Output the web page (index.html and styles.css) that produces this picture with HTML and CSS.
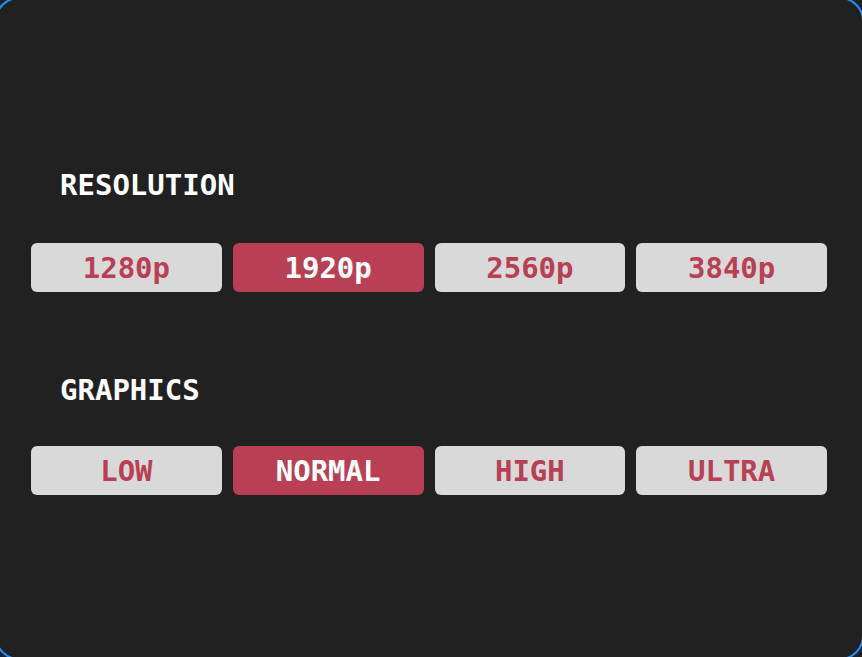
FILE: index.html
```html
<!DOCTYPE html>
<html lang="en">
<head>
<meta charset="utf-8">
<title>Settings</title>
<link rel="stylesheet" href="styles.css">
</head>
<body>
<div class="frame">
  <section class="section">
    <h2 class="heading">RESOLUTION</h2>
    <div class="options">
      <button class="option">1280p</button>
      <button class="option selected">1920p</button>
      <button class="option">2560p</button>
      <button class="option">3840p</button>
    </div>
  </section>
  <section class="section">
    <h2 class="heading">GRAPHICS</h2>
    <div class="options">
      <button class="option">LOW</button>
      <button class="option selected">NORMAL</button>
      <button class="option">HIGH</button>
      <button class="option">ULTRA</button>
    </div>
  </section>
</div>
</body>
</html>
```
FILE: styles.css
```css
html, body {
  margin: 0;
  padding: 0;
  background: #212121;
  overflow: hidden;
  height: 100%;
}

.frame {
  box-sizing: border-box;
  width: 869px;
  height: 663px;
  margin: -3px 0 0 -5px;
  border: 2px solid #1f8fff;
  border-radius: 24px;
  background: #212121;
  padding: 168px 35px 0 34px;
  display: flex;
  flex-direction: column;
  font-family: "DejaVu Sans Mono", "Liberation Mono", monospace;
}

.section + .section {
  margin-top: 80px;
}

.heading {
  margin: 0 0 40px 29px;
  font-size: 29px;
  line-height: 36px;
  font-weight: bold;
  color: #ffffff;
}

.section + .section .heading {
  margin-bottom: 38px;
}

.options {
  display: grid;
  grid-template-columns: repeat(4, 1fr);
  gap: 11px;
}

.option {
  height: 49px;
  border: none;
  border-radius: 6px;
  background: #d9d9d9;
  color: #b94054;
  font-family: inherit;
  font-size: 29px;
  font-weight: bold;
  line-height: 36px;
  padding: 0;
  display: flex;
  align-items: center;
  justify-content: center;
}

.option.selected {
  background: #b94054;
  color: #ffffff;
}
```
